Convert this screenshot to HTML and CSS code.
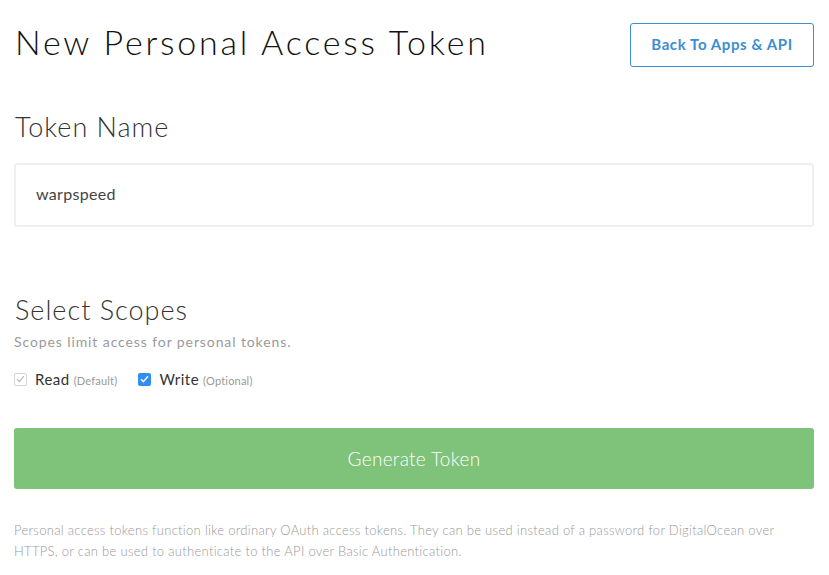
FILE: index.html
```html
<!DOCTYPE html>
<html>
<head>
<meta charset="utf-8">
<link rel="stylesheet" href="styles.css">
</head>
<body>
<div class="page">
  <header class="top">
    <h1 class="title">New Personal Access Token</h1>
    <a class="back-btn" href="#">Back To Apps &amp; API</a>
  </header>

  <section class="name-section">
    <h2 class="section-title">Token Name</h2>
    <div class="input-box">warpspeed</div>
  </section>

  <section class="scopes-section">
    <h2 class="section-title">Select Scopes</h2>
    <p class="help">Scopes limit access for personal tokens.</p>
    <div class="scopes">
      <label class="scope">
        <span class="check check-disabled">
          <svg width="9" height="8" viewBox="0 0 9 8"><path d="M1 4.2 L3.4 6.6 L8 1.2" fill="none" stroke="#b5b5b5" stroke-width="1.2"/></svg>
        </span>
        <span class="scope-name">Read</span>
        <span class="scope-note">(Default)</span>
      </label>
      <label class="scope">
        <span class="check check-on">
          <svg width="9" height="8" viewBox="0 0 9 8"><path d="M1 4.2 L3.4 6.6 L8 1.2" fill="none" stroke="#fff" stroke-width="1.4"/></svg>
        </span>
        <span class="scope-name">Write</span>
        <span class="scope-note">(Optional)</span>
      </label>
    </div>
  </section>

  <button class="generate">Generate Token</button>

  <p class="footnote">Personal access tokens function like ordinary OAuth access tokens. They can be used instead of a password for DigitalOcean over HTTPS, or can be used to authenticate to the API over Basic Authentication.</p>
</div>
</body>
</html>
```

FILE: styles.css
```css
* { box-sizing: border-box; }
html, body { margin: 0; padding: 0; background: #fff; }
body { font-family: "Lato", "Open Sans", sans-serif; color: #333; }
.page { padding: 0 15px 0 14px; width: 829px; }

.top {
  display: flex;
  justify-content: space-between;
  align-items: flex-start;
  padding-top: 23px;
}
.title {
  margin: 0;
  font-weight: 300;
  font-size: 34px;
  line-height: 38px;
  color: #111;
  letter-spacing: 2.8px;
  padding-left: 1px;
}
.back-btn {
  display: block;
  width: 184px;
  height: 44px;
  border: 1px solid #3b8ed3;
  border-radius: 3px;
  color: #3b8ed3;
  font-size: 15px;
  font-weight: 700;
  line-height: 41px;
  text-align: center;
  text-decoration: none;
  letter-spacing: 0.6px;
}

.name-section { margin-top: 44px; }
.section-title {
  margin: 0;
  font-weight: 300;
  font-size: 27px;
  line-height: 32px;
  color: #333;
  padding-left: 1px;
  letter-spacing: 1px;
}
.input-box {
  margin-top: 20px;
  height: 64px;
  border: 2px solid #efefef;
  border-radius: 3px;
  padding: 0 20px;
  font-size: 16px;
  line-height: 58px;
  color: #444;
  letter-spacing: 0.3px;
}

.scopes-section { margin-top: 67px; }
.help {
  margin: 6px 0 0;
  font-size: 14px;
  color: #9a9a9a;
  line-height: 20px;
  letter-spacing: 0.9px;
}
.scopes {
  display: flex;
  gap: 21px;
  margin-top: 17px;
  height: 20px;
  align-items: center;
}
.scope { display: flex; align-items: center; }
.check {
  width: 13px;
  height: 13px;
  border-radius: 2px;
  display: flex;
  align-items: center;
  justify-content: center;
  margin-right: 8px;
}
.check-disabled { border: 1px solid #d4d4d4; background: #fff; }
.check-on { background: #2f8ef0; }
.scope-name { font-size: 15px; color: #333; letter-spacing: 0.5px; }
.scope-note { font-size: 11px; color: #999; margin-left: 4px; margin-top: 2px; letter-spacing: 0.2px; }

.generate {
  display: block;
  width: 100%;
  margin-top: 39px;
  height: 61px;
  border: none;
  border-radius: 3px;
  background: #7fc27a;
  color: #fff;
  font-family: "Lato", sans-serif;
  font-weight: 300;
  font-size: 19px;
  letter-spacing: 0.3px;
}

.footnote {
  margin: 31px 0 0;
  font-size: 13px;
  line-height: 21px;
  color: #999;
  font-weight: 300;
  letter-spacing: 0.3px;
}
```
